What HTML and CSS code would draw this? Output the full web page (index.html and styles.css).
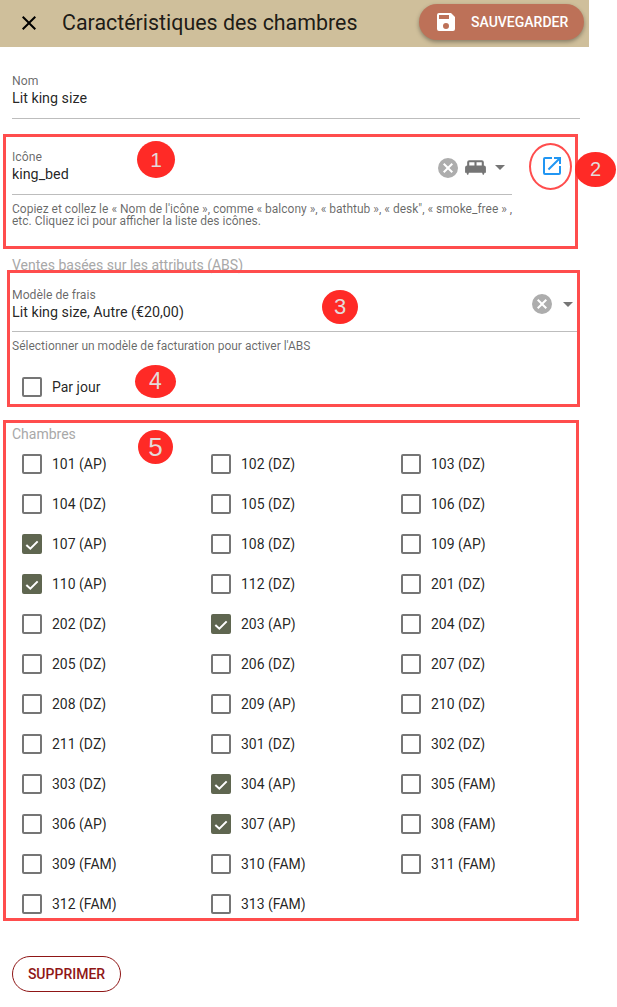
FILE: index.html
```html
<!DOCTYPE html>
<html lang="fr">
<head>
	<meta charset="utf-8">
	<title>Caractéristiques des chambres</title>
	<link rel="stylesheet" href="styles.css">
</head>
<body>
	<div class="toolbar">
		<svg class="close" viewBox="0 0 24 24"><path d="M19 6.41 17.59 5 12 10.59 6.41 5 5 6.41 10.59 12 5 17.59 6.41 19 12 13.41 17.59 19 19 17.59 13.41 12z"/></svg>
		<h1 class="title">Caractéristiques des chambres</h1>
		<button class="save">
			<svg viewBox="0 0 24 24"><path d="M17 3H5a2 2 0 0 0-2 2v14a2 2 0 0 0 2 2h14a2 2 0 0 0 2-2V7l-4-4zm-5 16a3 3 0 1 1 0-6 3 3 0 0 1 0 6zm3-10H5V5h10v4z"/></svg>
			SAUVEGARDER
		</button>
	</div>

	<div class="content">
		<div class="field field-name">
			<label>Nom</label>
			<div class="value">Lit king size</div>
		</div>

		<div class="icon-row">
			<div class="field field-icon">
				<label>Icône</label>
				<div class="value">king_bed</div>
				<div class="adorn">
					<svg class="clear" viewBox="0 0 24 24"><path d="M12 2a10 10 0 1 0 0 20 10 10 0 0 0 0-20zm5 13.59L15.59 17 12 13.41 8.41 17 7 15.59 10.59 12 7 8.41 8.41 7 12 10.59 15.59 7 17 8.41 13.41 12z"/></svg>
					<svg class="bed" viewBox="0 0 24 24"><path d="M20 10V7a2 2 0 0 0-2-2H6a2 2 0 0 0-2 2v3a2 2 0 0 0-2 2v5h1.33L4 19h1l.67-2h12.67l.66 2h1l.67-2H22v-5a2 2 0 0 0-2-2zm-9 0H6V7h5v3zm7 0h-5V7h5v3z"/></svg>
					<span class="caret"></span>
				</div>
			</div>
			<svg class="open" viewBox="0 0 24 24"><path d="M19 19H5V5h7V3H5a2 2 0 0 0-2 2v14a2 2 0 0 0 2 2h14a2 2 0 0 0 2-2v-7h-2v7zM14 3v2h3.59l-9.83 9.83 1.41 1.41L19 6.41V10h2V3h-7z"/></svg>
		</div>
		<p class="hint hint-icon">Copiez et collez le « Nom de l'icône », comme « balcony », « bathtub », « desk", « smoke_free » , etc. Cliquez ici pour afficher la liste des icônes.</p>

		<div class="section section-abs">Ventes basées sur les attributs (ABS)</div>

		<div class="field field-rate">
			<label>Modèle de frais</label>
			<div class="value">Lit king size, Autre (€20,00)</div>
			<div class="adorn">
				<svg class="clear" viewBox="0 0 24 24"><path d="M12 2a10 10 0 1 0 0 20 10 10 0 0 0 0-20zm5 13.59L15.59 17 12 13.41 8.41 17 7 15.59 10.59 12 7 8.41 8.41 7 12 10.59 15.59 7 17 8.41 13.41 12z"/></svg>
				<span class="caret"></span>
			</div>
		</div>
		<p class="hint">Sélectionner un modèle de facturation pour activer l'ABS</p>

		<div class="check check-day"><span class="box"></span>Par jour</div>

		<div class="section section-rooms">Chambres</div>
		<div class="rooms">
			<div class="check"><span class="box"></span>101 (AP)</div>
			<div class="check"><span class="box"></span>102 (DZ)</div>
			<div class="check"><span class="box"></span>103 (DZ)</div>
			<div class="check"><span class="box"></span>104 (DZ)</div>
			<div class="check"><span class="box"></span>105 (DZ)</div>
			<div class="check"><span class="box"></span>106 (DZ)</div>
			<div class="check"><span class="box on"><svg viewBox="0 0 24 24"><path d="M3.5 13.5l6 5.5L20.5 8"/></svg></span>107 (AP)</div>
			<div class="check"><span class="box"></span>108 (DZ)</div>
			<div class="check"><span class="box"></span>109 (AP)</div>
			<div class="check"><span class="box on"><svg viewBox="0 0 24 24"><path d="M3.5 13.5l6 5.5L20.5 8"/></svg></span>110 (AP)</div>
			<div class="check"><span class="box"></span>112 (DZ)</div>
			<div class="check"><span class="box"></span>201 (DZ)</div>
			<div class="check"><span class="box"></span>202 (DZ)</div>
			<div class="check"><span class="box on"><svg viewBox="0 0 24 24"><path d="M3.5 13.5l6 5.5L20.5 8"/></svg></span>203 (AP)</div>
			<div class="check"><span class="box"></span>204 (DZ)</div>
			<div class="check"><span class="box"></span>205 (DZ)</div>
			<div class="check"><span class="box"></span>206 (DZ)</div>
			<div class="check"><span class="box"></span>207 (DZ)</div>
			<div class="check"><span class="box"></span>208 (DZ)</div>
			<div class="check"><span class="box"></span>209 (AP)</div>
			<div class="check"><span class="box"></span>210 (DZ)</div>
			<div class="check"><span class="box"></span>211 (DZ)</div>
			<div class="check"><span class="box"></span>301 (DZ)</div>
			<div class="check"><span class="box"></span>302 (DZ)</div>
			<div class="check"><span class="box"></span>303 (DZ)</div>
			<div class="check"><span class="box on"><svg viewBox="0 0 24 24"><path d="M3.5 13.5l6 5.5L20.5 8"/></svg></span>304 (AP)</div>
			<div class="check"><span class="box"></span>305 (FAM)</div>
			<div class="check"><span class="box"></span>306 (AP)</div>
			<div class="check"><span class="box on"><svg viewBox="0 0 24 24"><path d="M3.5 13.5l6 5.5L20.5 8"/></svg></span>307 (AP)</div>
			<div class="check"><span class="box"></span>308 (FAM)</div>
			<div class="check"><span class="box"></span>309 (FAM)</div>
			<div class="check"><span class="box"></span>310 (FAM)</div>
			<div class="check"><span class="box"></span>311 (FAM)</div>
			<div class="check"><span class="box"></span>312 (FAM)</div>
			<div class="check"><span class="box"></span>313 (FAM)</div>
		</div>

		<button class="delete">SUPPRIMER</button>
	</div>

	<!-- annotations posées sur la capture -->
	<div class="mark mark-1"></div>
	<div class="mark mark-3"></div>
	<div class="mark mark-5"></div>
	<div class="ring"></div>
	<div class="badge badge-1">1</div>
	<div class="badge badge-2">2</div>
	<div class="badge badge-3">3</div>
	<div class="badge badge-4">4</div>
	<div class="badge badge-5">5</div>
</body>
</html>
```

FILE: styles.css
```css
* {
	box-sizing: border-box;
}

html, body {
	margin: 0;
	height: 1007px;
	overflow: hidden;
}

body {
	position: relative;
	background: #fff;
	color: rgba(0, 0, 0, 0.87);
	font-family: Roboto, "Liberation Sans", sans-serif;
	font-size: 14px;
}

.toolbar {
	display: flex;
	align-items: center;
	width: 589px;
	height: 47px;
	padding: 0 5px 1px 17px;
	background: #cfbf9b;
}

.close {
	width: 24px;
	height: 24px;
	fill: #000;
}

.title {
	flex: 1;
	margin: 0 0 2px 21px;
	font-size: 21.4px;
	font-weight: 400;
}

.save {
	display: flex;
	align-items: center;
	gap: 13px;
	width: 165px;
	height: 36px;
	margin-top: -2px;
	padding: 0 0 0 15px;
	border: 0;
	border-radius: 18px;
	background: #bd7158;
	box-shadow: 0 2px 4px rgba(0, 0, 0, 0.35);
	color: #fff;
	font: 500 14px Roboto, sans-serif;
}

.save svg {
	width: 24px;
	height: 24px;
	fill: #fff;
}

.content {
	padding: 0 37px 0 12px;
}

.field {
	position: relative;
	padding-top: 1px;
	border-bottom: 1px solid #bdbdbd;
}

.field label {
	display: block;
	color: rgba(0, 0, 0, 0.6);
	font-size: 12.2px;
	line-height: 14px;
}

.value {
	font-size: 14.3px;
	line-height: 20px;
}

.field-name {
	width: 568px;
	height: 46px;
	margin-top: 26px;
}

.icon-row {
	display: flex;
	margin-top: 30px;
}

.field-icon {
	width: 500px;
	height: 46px;
}

.field-rate {
	width: 568px;
	height: 45px;
	margin-top: 12px;
}

.adorn {
	position: absolute;
	right: 7px;
	top: 6px;
	display: flex;
	align-items: center;
}

.field-rate .adorn {
	top: 5px;
}

.clear {
	width: 24px;
	height: 24px;
	fill: #adadad;
}

.bed {
	width: 25px;
	height: 25px;
	margin-left: 3px;
	fill: #757575;
}

.caret {
	width: 0;
	height: 0;
	margin-left: 7px;
	border: 5px solid transparent;
	border-top-color: #757575;
	border-bottom: 0;
}

.field-rate .caret {
	margin-left: 9px;
}

.open {
	width: 24px;
	height: 24px;
	margin: 5px 0 0 28px;
	fill: #2196f3;
}

.hint {
	margin: 8px 0 0;
	color: rgba(0, 0, 0, 0.6);
	font-size: 12px;
	line-height: 12px;
}

.hint-icon {
	width: 504px;
}

.section {
	color: #a8a8a8;
	font-size: 14px;
	line-height: 20px;
}

.section-abs {
	margin-top: 28px;
}

.section-rooms {
	margin-top: 17px;
}

.check {
	display: flex;
	align-items: center;
	height: 40px;
	padding-left: 10px;
	font-size: 14px;
}

.check-day {
	margin-top: 15px;
}

.box {
	flex: none;
	width: 20px;
	height: 20px;
	margin-right: 10px;
	border: 2px solid #757575;
	border-radius: 2px;
}

.box.on {
	background: #5f6650;
	border-color: #5f6650;
}

.box svg {
	display: block;
	width: 16px;
	height: 16px;
	fill: none;
	stroke: #fff;
	stroke-width: 3;
}

.rooms {
	display: grid;
	grid-template-columns: 189px 190px 1fr;
}

.delete {
	display: block;
	width: 109px;
	height: 36px;
	margin-top: 32px;
	border: 1px solid #8f1616;
	border-radius: 18px;
	background: #fff;
	color: #8f1616;
	font: 500 14px Roboto, sans-serif;
}

/* annotations */
.mark {
	position: absolute;
	border: 3px solid #ff4d4d;
}

.mark-1 {
	left: 3px;
	top: 134px;
	width: 575px;
	height: 115px;
}

.mark-3 {
	left: 7px;
	top: 270px;
	width: 573px;
	height: 137px;
}

.mark-5 {
	left: 3px;
	top: 420px;
	width: 576px;
	height: 501px;
}

.ring {
	position: absolute;
	left: 529px;
	top: 143px;
	width: 43px;
	height: 47px;
	border: 2.5px solid #ff4d4d;
	border-radius: 50%;
}

.badge {
	position: absolute;
	display: flex;
	align-items: center;
	justify-content: center;
	border-radius: 50%;
	background: #ff2a26;
	color: #e4dada;
	font-family: "Liberation Sans", sans-serif;
}

.badge-1 {
	left: 137px;
	top: 141px;
	width: 38px;
	height: 37px;
	font-size: 21px;
}

.badge-2 {
	left: 575px;
	top: 152px;
	width: 41px;
	height: 35px;
	font-size: 20px;
}

.badge-3 {
	left: 322px;
	top: 290px;
	width: 36px;
	height: 34px;
	font-size: 22px;
}

.badge-4 {
	left: 135px;
	top: 365px;
	width: 41px;
	height: 33px;
	font-size: 23px;
}

.badge-5 {
	left: 138px;
	top: 430px;
	width: 35px;
	height: 34px;
	font-size: 26px;
}
```
